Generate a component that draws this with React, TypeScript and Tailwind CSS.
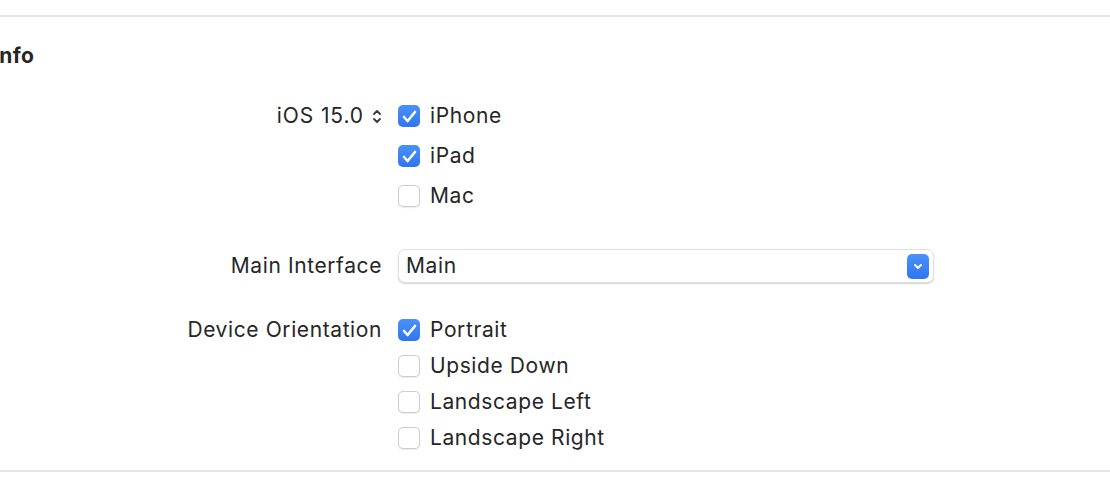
import React from 'react';

const font = { fontFamily: 'Inter, "Noto Sans", sans-serif' };

const Checkbox: React.FC<{ checked?: boolean; label: string }> = ({ checked, label }) => (
  <div className="flex h-[22px] items-center gap-[10px]">
    {checked ? (
      <div className="flex h-[22px] w-[22px] items-center justify-center rounded-[5px] bg-gradient-to-b from-[#4a92f9] to-[#2f75f2]">
        <svg width="15" height="13" viewBox="0 0 15 13" fill="none">
          <path d="M2 7 L5.6 11 L13 2" stroke="white" strokeWidth="2.6" strokeLinecap="round" strokeLinejoin="round" />
        </svg>
      </div>
    ) : (
      <div className="h-[22px] w-[22px] rounded-[5px] border border-[#cdcdcd] bg-white shadow-[0_0.5px_1px_rgba(0,0,0,0.08)]" />
    )}
    <span className="text-[21px] leading-[22px] tracking-[0.6px] text-[#262626]">{label}</span>
  </div>
);

const Row: React.FC<{ label: React.ReactNode; children: React.ReactNode; className?: string }> = ({
  label,
  children,
  className = '',
}) => (
  <div className={`flex ${className}`}>
    <div className="flex h-[22px] w-[382px] items-center justify-end text-[21px] leading-[22px] tracking-[0.6px] text-[#262626]">
      {label}
    </div>
    <div className="ml-4 flex flex-1 flex-col">{children}</div>
  </div>
);

export default function App() {
  return (
    <div className="h-[500px] w-[1110px] overflow-hidden bg-white pt-[15px]" style={font}>
      <div className="h-[2px] bg-[#e4e4e4]" />

      <h2 className="-ml-[7px] mt-[27px] h-6 text-[21px] font-bold leading-6 tracking-[0.4px] text-[#262626]">
        Info
      </h2>

      <Row
        className="mt-[37px]"
        label={
          <span className="flex items-center gap-[8px] tracking-[0.9px]">
            iOS 15.0
            <svg width="10" height="15" viewBox="0 0 10 15" fill="none">
              <path d="M2 5 L5 2 L8 5" stroke="#3a3a3a" strokeWidth="1.8" strokeLinecap="round" strokeLinejoin="round" />
              <path d="M2 10 L5 13 L8 10" stroke="#3a3a3a" strokeWidth="1.8" strokeLinecap="round" strokeLinejoin="round" />
            </svg>
          </span>
        }
      >
        <div className="flex flex-col gap-[18px]">
          <Checkbox checked label="iPhone" />
          <Checkbox checked label="iPad" />
          <Checkbox label="Mac" />
        </div>
      </Row>

      <div className="mt-[42px] flex">
        <div className="flex h-[34px] w-[382px] items-center justify-end text-[21px] tracking-[0.6px] text-[#262626]">
          Main Interface
        </div>
        <div className="ml-4 flex h-[34px] w-[536px] items-center justify-between rounded-[7px] border border-[#e0e0e0] bg-white pl-[7px] pr-[4px] shadow-[0_1px_1.5px_rgba(0,0,0,0.18)]">
          <span className="text-[21px] tracking-[0.6px] text-[#262626]">Main</span>
          <div className="flex h-[25px] w-[22px] items-center justify-center rounded-[5px] bg-gradient-to-b from-[#4a92f9] to-[#2f75f2]">
            <svg width="10" height="7" viewBox="0 0 10 7" fill="none">
              <path d="M2 2 L5 5 L8 2" stroke="white" strokeWidth="2" strokeLinecap="round" strokeLinejoin="round" />
            </svg>
          </div>
        </div>
      </div>

      <Row className="mt-[36px]" label="Device Orientation">
        <div className="flex flex-col gap-[14px]">
          <Checkbox checked label="Portrait" />
          <Checkbox label="Upside Down" />
          <Checkbox label="Landscape Left" />
          <Checkbox label="Landscape Right" />
        </div>
      </Row>

      <div className="mt-[21px] h-[2px] bg-[#e4e4e4]" />
    </div>
  );
}
